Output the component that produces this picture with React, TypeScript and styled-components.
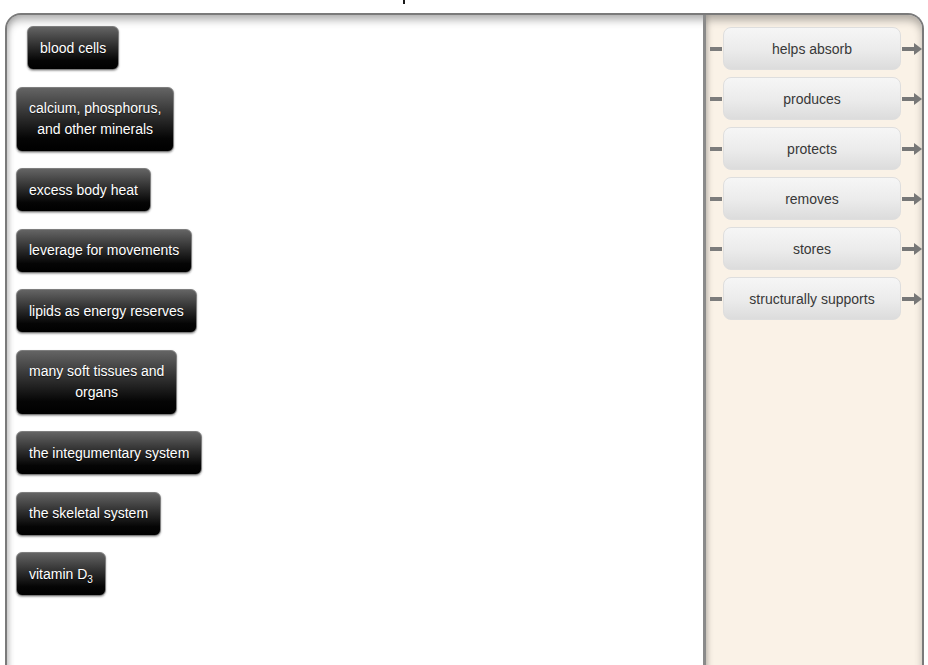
import React from 'react';
import styled, { createGlobalStyle } from 'styled-components';

const GlobalStyle = createGlobalStyle`
  html, body {
    margin: 0;
    padding: 0;
    background: #ffffff;
    overflow: hidden;
  }
  body {
    font-family: 'Liberation Sans', Arial, sans-serif;
  }
`;

const TopStrip = styled.div`
  height: 13px;
  display: flex;
  align-items: flex-start;
  padding-left: 403px;
`;

const Descender = styled.span`
  width: 2px;
  height: 4px;
  background: #1a1a1a;
`;

const Board = styled.div`
  display: grid;
  grid-template-columns: 1fr 219px;
  height: 660px;
  margin: 0 4px 0 5px;
  border: 2px solid #7a7a7a;
  border-bottom: none;
  border-radius: 16px 16px 0 0;
  background: #ffffff;
  box-shadow: inset 0 6px 8px -1px rgba(0, 0, 0, 0.3),
    inset 4px 0 5px -2px rgba(0, 0, 0, 0.12);
  overflow: hidden;
`;

const SourcePane = styled.div`
  display: flex;
  flex-direction: column;
  align-items: flex-start;
  gap: 16.5px;
  padding: 11px 0 0 9px;
`;

const Chip = styled.div<{ $indent?: boolean }>`
  margin-left: ${p => (p.$indent ? '11px' : '0')};
  padding: 10.5px 12px;
  border: 1px solid #7e7e7e;
  border-radius: 6px;
  background: linear-gradient(to bottom, #646464 0%, #2e2e2e 45%, #050505 80%, #000000 100%);
  box-shadow: 0 1px 2px rgba(0, 0, 0, 0.35);
  color: #ffffff;
  font-size: 14px;
  line-height: 21px;
  text-align: center;
  text-shadow: 0 1px 1px rgba(0, 0, 0, 0.6);
  white-space: nowrap;

  sub {
    font-size: 10px;
    line-height: 0;
    vertical-align: -4px;
  }
`;

const TargetPane = styled.div`
  display: flex;
  flex-direction: column;
  gap: 7px;
  padding: 12px 0 0 4px;
  border-left: 3px solid #8a8a8a;
  border-top-right-radius: 14px;
  background: #faf2e7;
  box-shadow: inset 0 6px 8px -1px rgba(0, 0, 0, 0.3),
    inset 4px 0 4px -2px rgba(0, 0, 0, 0.1);
`;

const TargetRow = styled.div`
  display: flex;
  align-items: center;
`;

const Lead = styled.span`
  width: 12px;
  height: 4px;
  margin-right: 1px;
  background: #7c7c7c;
`;

const Slot = styled.div`
  width: 176px;
  height: 41px;
  display: flex;
  align-items: center;
  justify-content: center;
  border: 1px solid #dedede;
  border-radius: 8px;
  background: linear-gradient(to bottom, #f6f6f6 0%, #ebebeb 55%, #dcdcdc 100%);
  color: #383838;
  font-size: 14px;
`;

const ArrowIcon = styled.svg`
  flex: none;
  margin-left: 1px;
`;

const Arrow = () => (
  <ArrowIcon width="20" height="12" viewBox="0 0 20 12">
    <rect x="0" y="4" width="13" height="4" fill="#777777" />
    <polygon points="12,0 20,6 12,12" fill="#777777" />
  </ArrowIcon>
);

const terms: { label: React.ReactNode; indent?: boolean }[] = [
  { label: 'blood cells', indent: true },
  { label: <>calcium, phosphorus,<br />and other minerals</> },
  { label: 'excess body heat' },
  { label: 'leverage for movements' },
  { label: 'lipids as energy reserves' },
  { label: <>many soft tissues and<br />organs</> },
  { label: 'the integumentary system' },
  { label: 'the skeletal system' },
  { label: <>vitamin D<sub>3</sub></> },
];

const verbs = ['helps absorb', 'produces', 'protects', 'removes', 'stores', 'structurally supports'];

export default function App() {
  return (
    <>
      <GlobalStyle />
      <TopStrip>
        <Descender />
      </TopStrip>
      <Board>
        <SourcePane>
          {terms.map((t, i) => (
            <Chip key={i} $indent={t.indent}>
              {t.label}
            </Chip>
          ))}
        </SourcePane>
        <TargetPane>
          {verbs.map(v => (
            <TargetRow key={v}>
              <Lead />
              <Slot>{v}</Slot>
              <Arrow />
            </TargetRow>
          ))}
        </TargetPane>
      </Board>
    </>
  );
}
